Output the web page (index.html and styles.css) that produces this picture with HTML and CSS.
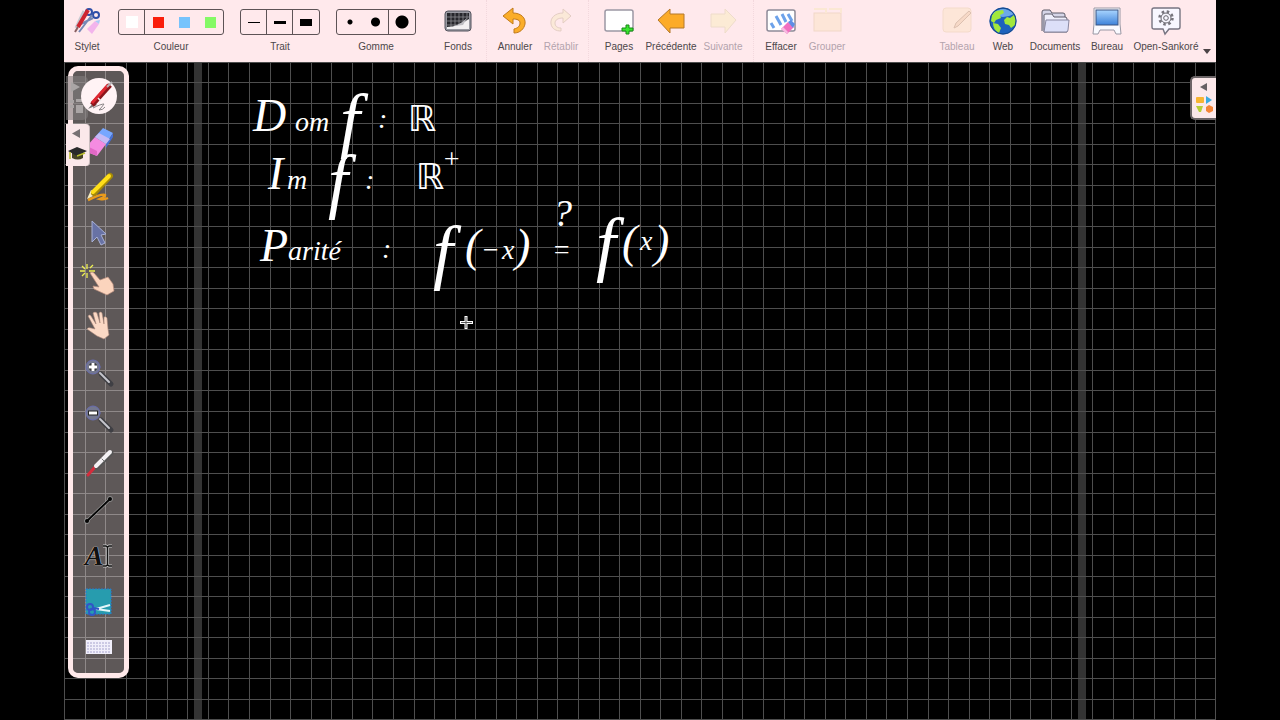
FILE: index.html
```html
<!DOCTYPE html>
<html lang="fr">
<head>
<meta charset="utf-8">
<title>Open-Sankoré</title>
<link rel="stylesheet" href="styles.css">
</head>
<body>
<div class="app">
  <header class="toolbar">
    <button class="tool"><svg class="icon" width="30" height="30" viewBox="0 0 30 30" fill="none">
      <path d="M15 23l8-8 4 3-7 10z" fill="#f3b4ec"/><path d="M23 15l5-1-1 4z" fill="#a9c8f5"/>
      <circle cx="17" cy="6" r="3" stroke="#2f4fa8" stroke-width="2"/><circle cx="24" cy="9" r="3" stroke="#2f4fa8" stroke-width="2"/>
      <path d="M20 9L7 26M21 12L9 18" stroke="#7688b5" stroke-width="2"/>
      <path d="M12 5L4 22" stroke="#c5c8cf" stroke-width="3"/><path d="M16 4L6 21" stroke="#cf2530" stroke-width="4"/><path d="M6 21l-3 5" stroke="#8a6062" stroke-width="2"/>
    </svg><span>Stylet</span></button>
    <fieldset class="choices choices-first">
      <div class="segments">
        <input class="seg seg-on seg-white" type="radio" name="color" aria-label="Blanc" checked>
        <input class="seg seg-red" type="radio" name="color" aria-label="Rouge">
        <input class="seg seg-blue" type="radio" name="color" aria-label="Bleu">
        <input class="seg seg-green" type="radio" name="color" aria-label="Vert">
      </div>
      <legend>Couleur</legend>
    </fieldset>
    <fieldset class="choices">
      <div class="segments">
        <input class="seg seg-on seg-thin" type="radio" name="line" aria-label="Fin">
        <input class="seg seg-on seg-medium" type="radio" name="line" aria-label="Moyen" checked>
        <input class="seg seg-thick" type="radio" name="line" aria-label="Fort">
      </div>
      <legend>Trait</legend>
    </fieldset>
    <fieldset class="choices">
      <div class="segments">
        <input class="seg seg-dot-s" type="radio" name="eraser" aria-label="Petite">
        <input class="seg seg-on seg-dot-m" type="radio" name="eraser" aria-label="Moyenne">
        <input class="seg seg-dot-l" type="radio" name="eraser" aria-label="Grande" checked>
      </div>
      <legend>Gomme</legend>
    </fieldset>
    <div class="group group-wide">
      <button class="tool"><svg class="icon" width="30" height="30" viewBox="0 0 30 30">
        <rect x="2" y="5" width="26" height="20" rx="3" fill="#9a9aa2" stroke="#55555f"/><rect x="4" y="7" width="22" height="16" fill="#26262b"/>
        <path d="M4 11h22M4 15h22M4 19h22M8 7v16M12 7v16M16 7v16M20 7v16M24 7v16" stroke="#8d8d92" stroke-width=".8"/>
        <path d="M4 23v-2q11 0 22-8v10z" fill="#f2f0f2"/><path d="M4 21q11 0 20-9l-4 7z" fill="#bdbdc2"/>
      </svg><span>Fonds</span></button>
    </div>
    <div class="group">
      <button class="tool"><svg class="icon" width="30" height="30" viewBox="0 0 30 30">
        <path d="M3 10l10-8v5c8 0 13 5 12 11-1 5-5 9-11 9v-4c4-1 6-3 6-6 0-3-3-4-7-4v5z" fill="#fbad29" stroke="#c07a1c"/>
      </svg><span>Annuler</span></button>
      <button class="tool" disabled><svg class="icon" width="30" height="30" viewBox="0 0 30 30">
        <path d="M25 10l-8-7v4C9 7 4 12 5 18c1 5 5 7 10 7v-3c-4 0-6-2-6-5 0-3 3-5 8-5v5z" fill="#fbe9d8" stroke="#e4cdc4"/>
      </svg><span>Rétablir</span></button>
    </div>
    <div class="group group-pages">
      <button class="tool"><svg class="icon" width="30" height="30" viewBox="0 0 30 30">
        <rect x="1" y="4" width="28" height="21" rx="2" fill="#fff" stroke="#9c98a4" stroke-width="1.5"/>
        <path d="M22 19h3v3h4v3h-4v3h-3v-3h-4v-3h4z" fill="#39e52f" stroke="#188a16"/>
      </svg><span>Pages</span></button>
      <button class="tool"><svg class="icon" width="30" height="30" viewBox="0 0 30 30">
        <path d="M2 14L14 3v5h14v14H14v5z" fill="#fcab28" stroke="#b4782b" stroke-linejoin="round"/>
      </svg><span>Précédente</span></button>
      <button class="tool" disabled><svg class="icon" width="30" height="30" viewBox="0 0 30 30">
        <path d="M28 14L17 3v5H3v13h14v6z" fill="#fcebd5" stroke="#eedccb" stroke-linejoin="round"/>
      </svg><span>Suivante</span></button>
    </div>
    <div class="group group-erase">
      <button class="tool"><svg class="icon" width="30" height="30" viewBox="0 0 30 30">
        <rect x="1" y="4" width="28" height="21" rx="2" fill="#fff" stroke="#8e8a98" stroke-width="1.5"/>
        <path d="M5 17l3 5M10 10l5 9M16 8l4 8M22 8l4 7" fill="none" stroke="#6da2ea" stroke-width="3"/>
        <path d="M15 23l7-7 6 5-7 7z" fill="#f16fc0"/><path d="M22 16l3-2 4 4-2 4z" fill="#5f8de5"/><path d="M15 23l2-2 5 5-1 2z" fill="#f7bce1"/>
      </svg><span>Effacer</span></button>
      <button class="tool" disabled><svg class="icon" width="30" height="30" viewBox="0 0 30 30">
        <rect x="2" y="7" width="27" height="18" fill="#fde6d8" stroke="#f1d8c8"/><path d="M2 3h12v4M17 3h12v4" fill="none" stroke="#fbe8d4" stroke-width="2"/>
      </svg><span>Grouper</span></button>
    </div>
    <div class="group group-right">
      <button class="tool" disabled><svg class="icon" width="30" height="30" viewBox="0 0 30 30">
        <rect x="1" y="2" width="28" height="24" rx="3" fill="#fde6d8" stroke="#f4dbcb"/><path d="M12 22l2-5L27 5l2 2-13 13z" fill="#f7d9c7" stroke="#dcc0b0"/>
      </svg><span>Tableau</span></button>
      <button class="tool"><svg class="icon" width="30" height="30" viewBox="0 0 30 30">
        <circle cx="15" cy="15" r="13.5" fill="#1e62bd"/><path d="M4 8Q15-2 26 8q-11 6-22 0z" fill="#6da9e8"/>
        <path d="M4 9l4-4 7-1 1 3-4 2 1 3-5 2-2 3-3-2zM16 14l3-3 3 1 4-3 2 5-1 5-4 3-2-3-4-1zM5 17l5 1 3 4-2 5q-6-3-6-10z" fill="#a2e83c"/>
        <circle cx="15" cy="15" r="13" fill="none" stroke="#174887"/>
      </svg><span>Web</span></button>
      <button class="tool tool-docs"><svg class="icon" width="30" height="30" viewBox="0 0 30 30">
        <path d="M2 25V6q0-2 2-2h6l2 3h11q2 0 2 2v4" fill="#d5d5e7" stroke="#5d5b68"/><path d="M4 26V9q0-1 2-1h6l2 3h11q2 0 2 2v13z" fill="#eeeefb" stroke="#5d5b68"/>
        <path d="M4 26l2-12h23l-1 10q0 2-2 2z" fill="#dcdff8" stroke="#8887a0"/>
      </svg><span>Documents</span></button>
      <button class="tool"><svg class="icon" width="30" height="30" viewBox="0 0 30 30">
        <defs><linearGradient id="screen" x2="0" y2="1"><stop stop-color="#a9d5ff"/><stop offset="1" stop-color="#3d82d9"/></linearGradient></defs>
        <path d="M2 2h26v16l1 10h-5l-2-4H8l-2 4H1l1-10z" fill="#fafaff" stroke="#9a98a4"/><rect x="4" y="4" width="22" height="15" fill="url(#screen)" stroke="#3a5380"/>
      </svg><span>Bureau</span></button>
      <button class="tool tool-menu"><svg class="icon" width="30" height="30" viewBox="0 0 30 30">
        <path d="M3 2h24q2 0 2 2v17q0 2-2 2h-9l-4 5-2-5H3q-2 0-2-2V4q0-2 2-2z" fill="#f8f7ff" stroke="#777481" stroke-width="1.4"/>
        <circle cx="15" cy="12" r="6.5" fill="none" stroke="#77757d" stroke-width="2.5" stroke-dasharray="2.5 2.6"/><circle cx="15" cy="12" r="5" fill="#f8f7ff" stroke="#68666e"/><circle cx="15" cy="12" r="2.3" fill="none" stroke="#68666e"/>
      </svg><span>Open-Sankoré</span></button>
      <svg class="caret" width="8" height="5" viewBox="0 0 8 5"><path d="M0 0h8L4 5z" fill="#4b4346"/></svg>
    </div>
  </header>

  <main class="board">
    <svg class="canvas" width="100%" height="100%">
      <g class="page-edges"><rect x="50%" width="8" height="100%" transform="translate(-446)"/><rect x="50%" width="8" height="100%" transform="translate(438)"/></g>
      <g id="grid" class="grid"></g>
      <g class="ink">
        <text x="189" y="69" class="ink-cap">D</text><text x="231" y="69" class="ink-low">om</text>
        <text x="276" y="82" class="ink-fn">f</text><text x="314" y="66" class="ink-low">:</text><text x="344" y="69" class="ink-set">ℝ</text>
        <text x="204" y="127" class="ink-cap">I</text><text x="223" y="127" class="ink-low">m</text>
        <text x="264" y="143" class="ink-fn">f</text><text x="301" y="127" class="ink-low">:</text><text x="352" y="127" class="ink-set">ℝ</text><text x="378" y="106" class="ink-low">+</text>
        <text x="196" y="199" class="ink-cap">P</text><text x="224" y="198" class="ink-low">arité</text><text x="318" y="196" class="ink-low">:</text>
        <text x="369" y="214" class="ink-fn">f</text><text x="401" y="199" class="ink-cap">(</text><text x="417" y="197" class="ink-low">−</text><text x="438" y="197" class="ink-low">x</text><text x="451" y="199" class="ink-cap">)</text>
        <text x="489" y="164" class="ink-ask">?</text><text x="488" y="197" class="ink-low">=</text>
        <text x="532" y="206" class="ink-fn">f</text><text x="558" y="195" class="ink-cap">(</text><text x="576" y="188" class="ink-low">x</text><text x="590" y="195" class="ink-cap">)</text>
      </g>
      <path d="M402 254v13M396 260.500h13" stroke="#fff" stroke-width="3"/><path d="M402 255v11M397 260.500h11" stroke="#555" stroke-width="1"/>
    </svg>

    <button class="tab tab-dim" aria-label="Pages"><svg width="22" height="42" viewBox="0 0 22 42"><path d="M5 5l9 5-9 5zM4 23h4v3H4zM10 22h7v3h-7zM10 28h7v8h-7zM4 28h4v3H4z" fill="#aaa5a5"/></svg></button>
    <button class="tab tab-left" aria-label="Parcours"><svg width="23" height="42" viewBox="0 0 23 42"><path d="M14 5v9L6 9.500z" fill="#777073"/><path d="M6 29v5q6 3 11 0v-5z" fill="#464326"/><path d="M2 27l9-4 10 4-10 5z" fill="#29292a"/><path d="M4 28v7M11 32l8-3" stroke="#b9bd2c" stroke-width="1.500"/></svg></button>
    <button class="tab tab-right" aria-label="Bibliothèque"><svg width="24" height="40" viewBox="0 0 24 40"><path d="M15 5v8l-7-4z" fill="#666063"/><rect x="4" y="19" width="8" height="6" rx="1" fill="#f7b531"/><path d="M14 18l6 4-6 4z" fill="#39a9dd"/><path d="M4 28h7l-2 6H7z" fill="#b8cf36"/><path d="M14 29l3-2 4 2v4l-4 2-3-2z" fill="#f48436"/></svg></button>

    <nav class="palette" aria-label="Outils">
      <button class="pick pick-on" aria-label="Stylo"><svg width="36" height="36" viewBox="0 0 36 36" fill="none"><path d="M12 30q8-4 11-4-2 3-5 6 4 0 6-3" stroke="#8a8587"/><path d="M7 31l6-7 3 3z" fill="#777"/><path d="M11 27L29 7" stroke="#8b151b" stroke-width="5"/><path d="M11 25L27 7" stroke="#df2731" stroke-width="3"/><path d="M26 9l5-5" stroke="#b5b1b5" stroke-width="2"/><path d="M17 20l3 3" stroke="#eee" stroke-width="1.500"/></svg></button>
      <button class="pick" aria-label="Gomme"><svg width="30" height="30" viewBox="0 0 30 30"><path d="M11 10l8-9 10 5-7 11z" fill="#76a7ff"/><path d="M3 19l8-9 11 7-9 12-10-4z" fill="#f58be1"/><path d="M3 19l10 5v5L3 25z" fill="#e168c5"/><path d="M29 6v4l-7 11v-4z" fill="#4770d5"/><path d="M11 10l4-4 11 6-4 5z" fill="#c5baf5"/></svg></button>
      <button class="pick" aria-label="Surligneur"><svg width="30" height="30" viewBox="0 0 30 30" fill="none"><path d="M4 27q15-7 17-5 0 2-5 4 4 1 8-1" stroke="#e99b1d" stroke-width="2.500"/><path d="M3 26l4-9 6 4z" fill="#f6edc1"/><path d="M10 20L26 3" stroke="#a58a08" stroke-width="6" stroke-linecap="round"/><path d="M9 19L25 3" stroke="#ffdf19" stroke-width="4" stroke-linecap="round"/></svg></button>
      <button class="pick" aria-label="Sélection"><svg width="30" height="30" viewBox="0 0 30 30"><path d="M8 2l14 13-5 1 4 8-4 2-4-8-5 5z" fill="#6872a5" stroke="#a8b0d5"/></svg></button>
      <button class="pick" aria-label="Interagir"><svg width="34" height="34" viewBox="0 0 34 34"><path d="M5 1v5M5 10v5M-2 8h5M7 8h6M0 3l3 3M11 2L8 5M0 13l3-3" stroke="#eef052" stroke-width="1.300"/><path d="M8 10q2-2 4 0l6 7 8-3 5 7 1 7-7 4-13-6-1-3 6 1z" fill="#fbd4bd" stroke="#b88d7c" stroke-width=".7"/></svg></button>
      <button class="pick" aria-label="Main"><svg width="30" height="30" viewBox="0 0 30 30"><path d="M4 5q2-2 3 0l5 8-3-11q2-2 4 0l3 10-1-10q2-2 3 0l2 11V6q2-1 3 1l1 11 1 6-5 4-7-3-10-7q1-2 4-1l4 1z" fill="#fbd9c5" stroke="#a98779" stroke-width=".6"/></svg></button>
      <button class="pick" aria-label="Zoom avant"><svg width="30" height="30" viewBox="0 0 30 30" stroke-linecap="round"><path d="M17 17l10 10" stroke="#3f3f44" stroke-width="5"/><path d="M16 16l9 9" stroke="#c5c5cc" stroke-width="2"/><circle cx="9" cy="10" r="7" fill="#74788f" stroke="#696db0"/><path d="M9 6v8M5 10h8" stroke="#222" stroke-width="5" stroke-linecap="butt"/><path d="M9 6v8M5 10h8" stroke="#fff" stroke-width="3" stroke-linecap="butt"/></svg></button>
      <button class="pick" aria-label="Zoom arrière"><svg width="30" height="30" viewBox="0 0 30 30" stroke-linecap="round"><path d="M17 17l10 10" stroke="#3f3f44" stroke-width="5"/><path d="M16 16l9 9" stroke="#c5c5cc" stroke-width="2"/><circle cx="9" cy="10" r="7" fill="#74788f" stroke="#696db0"/><path d="M4 10h10" stroke="#222" stroke-width="5" stroke-linecap="butt"/><path d="M5 10h8" stroke="#fff" stroke-width="3" stroke-linecap="butt"/></svg></button>
      <button class="pick" aria-label="Pointeur laser"><svg width="30" height="30" viewBox="0 0 30 30" stroke-linecap="round"><path d="M4 26l7-8" stroke="#d52c3c" stroke-width="3"/><path d="M13 18L27 4" stroke="#555" stroke-width="5"/><path d="M12 17L26 3" stroke="#f4f1f4" stroke-width="4"/><path d="M18 10l2 2" stroke="#777"/></svg></button>
      <button class="pick" aria-label="Ligne"><svg width="30" height="30" viewBox="0 0 30 30"><path d="M3 26L26 4" stroke="#bbb" stroke-width="3"/><g fill="#050505" stroke="#bbb" stroke-width=".7"><circle cx="3" cy="26" r="2.500"/><circle cx="26" cy="4" r="2.500"/></g><path d="M3 26L26 4" stroke="#050505" stroke-width="2"/></svg></button>
      <button class="pick pick-text" aria-label="Texte"><span>A</span><svg width="9" height="22" viewBox="0 0 9 22" fill="none"><path d="M0 1h3l1.500 1L6 1h3M0 21h3l1.500-1L6 21h3M4.500 2v18" stroke="#ccc" stroke-width="3"/><path d="M0 1h3l1.500 1L6 1h3M0 21h3l1.500-1L6 21h3M4.500 2v18" stroke="#111" stroke-width="1.500"/></svg></button>
      <button class="pick" aria-label="Capturer"><svg width="30" height="30" viewBox="0 0 30 30" fill="none"><rect x="2" y="2" width="25" height="25" fill="#279cae" stroke="#267acd" stroke-dasharray="2 1"/><path d="M12 22l14-4M12 22l14 2" stroke="#e4f7fa" stroke-width="2"/><g stroke="#3156c7" stroke-width="2"><circle cx="6" cy="20" r="3"/><circle cx="8" cy="25" r="3"/><path d="M9 21l6 1"/></g></svg></button>
      <button class="pick" aria-label="Clavier"><svg width="30" height="30" viewBox="0 0 30 30"><rect x="2" y="7" width="26" height="14" fill="#f1effb"/><path d="M3 10h24M3 13h24M3 16h24M3 19h24" stroke="#a8a5ce" stroke-dasharray="2 1"/></svg></button>
    </nav>
  </main>
</div>
<script src="grid.js"></script>
</body>
</html>
```
FILE: styles.css
```css
* { box-sizing: border-box; }
html, body { height: 100%; }
body {
  margin: 0;
  background: #000;
  overflow: hidden;
  font-family: "Liberation Sans", Arial, sans-serif;
  font-size: 10px;
  line-height: 12px;
  color: #4c474a;
}
button { border: 0; padding: 0; margin: 0; background: none; font: inherit; color: inherit; }
svg { display: block; overflow: visible; }
.app { height: 100%; margin: 0 5%; display: flex; flex-direction: column; }

.toolbar { display: flex; flex: none; background: #ffe9ec; height: 62px; padding-right: 5px; }
.tool { width: 46px; padding-top: 6px; display: flex; flex-direction: column; align-items: center; gap: 5px; white-space: nowrap; }
.tool:disabled { color: #b3a3ad; }
.choices { border: 0; margin: 0 0 0 16px; padding: 9px 0 0; min-width: 0; display: flex; flex-direction: column; }
.choices-first { margin-left: 8px; }
.choices legend { float: left; order: 2; padding: 0; margin-top: 6px; width: 100%; text-align: center; }
.segments { display: flex; order: 1; height: 26px; border: 1px solid #5d5356; border-radius: 3px; }
.seg { appearance: none; margin: 0; width: 26px; height: 24px; background-position: center; background-repeat: no-repeat; }
.seg-on { border-right: 1px solid #5d5356; }
.seg-white { background-image: linear-gradient(#fff, #fff); background-size: 12px 12px; }
.seg-red { background-image: linear-gradient(#fa1e0b, #fa1e0b); background-size: 11px 11px; }
.seg-blue { background-image: linear-gradient(#77c3fc, #77c3fc); background-size: 11px 11px; }
.seg-green { background-image: linear-gradient(#85f966, #85f966); background-size: 11px 11px; }
.seg-thin { background-image: linear-gradient(#000, #000); background-size: 12px 1px; }
.seg-medium { background-image: linear-gradient(#000, #000); background-size: 12px 3px; }
.seg-thick { background-image: linear-gradient(#000, #000); background-size: 12px 7px; }
.seg-dot-s { background-image: radial-gradient(circle, #000 2px, transparent 3px); }
.seg-dot-m { background-image: radial-gradient(circle, #000 4px, transparent 5px); }
.seg-dot-l { background-image: radial-gradient(circle, #000 6px, transparent 7px); }
.group { display: flex; padding: 0 4px; border-right: 1px dotted #f3d8dd; }
.group-wide { margin-left: 14px; padding: 0; margin-right: 1px; }
.group-wide .tool { width: 56px; }
.group-pages .tool { width: 52px; }
.group-erase { border: 0; }
.group-right { margin-left: auto; padding: 0; border: 0; }
.group-right .tool-docs { width: 58px; }
.group-right .tool-menu { width: 72px; }
.caret { margin: 49px 0 0 1px; }

.board { position: relative; flex: 1; min-height: 0; background: #000; }
.canvas { position: absolute; inset: 0; overflow: hidden; }
.page-edges { fill: #333; }
.grid { fill: none; stroke: #4e4e4e; stroke-width: 1px; }
.ink { fill: #fff; font-family: "Liberation Serif", "DejaVu Sans", serif; font-style: italic; }
.ink-cap { font-size: 46px; }
.ink-low { font-size: 28px; }
.ink-fn { font-size: 72px; }
.ink-ask { font-size: 38px; }
.ink-set { font-size: 36px; font-family: "DejaVu Sans", sans-serif; font-style: normal; }

.palette {
  position: absolute; left: 4px; top: 4px;
  padding: 2px 0;
  display: flex; flex-direction: column;
  border: 5px solid #ffe9ea; border-radius: 10px;
  background: rgba(255, 238, 238, .37); background-clip: padding-box;
}
.pick { width: 51px; height: 46px; display: flex; align-items: center; justify-content: center; }
.pick-on { position: relative; z-index: 3; }
.pick-on svg { background: #fff3f5; border-radius: 50%; }
.pick-text { font: italic bold 28px/28px "Liberation Serif", serif; color: #111; text-shadow: 0 0 1px #ddd, 0 0 1px #ddd; }
.tab { position: absolute; z-index: 2; background: #fbe8ea; }
.tab-dim { left: 2px; top: 14px; height: 44px; background: rgba(130, 125, 125, .6); border-radius: 0 5px 5px 0; }
.tab-left { left: 2px; top: 62px; border-radius: 0 4px 4px 0; border-right: 1px solid #c9bcbe; }
.tab-right { right: 0; top: 14px; border: 2px solid #6b6466; border-right: 0; border-radius: 5px 0 0 5px; }
```
FILE: grid.js
```javascript
const grid = document.getElementById('grid');
const step = 20.56;

function drawGrid() {
  const { clientWidth: w, clientHeight: h } = grid.ownerSVGElement.parentNode;
  let d = '';
  for (let x = 0; x <= w; x += step) d += `M${Math.round(x) + 0.5} 0V${h}`;
  for (let y = 0; y <= h; y += step) d += `M0 ${Math.floor(y) + 0.5}H${w}`;
  grid.innerHTML = `<path d="${d}"/>`;
}

drawGrid();
window.addEventListener('resize', drawGrid);
```
